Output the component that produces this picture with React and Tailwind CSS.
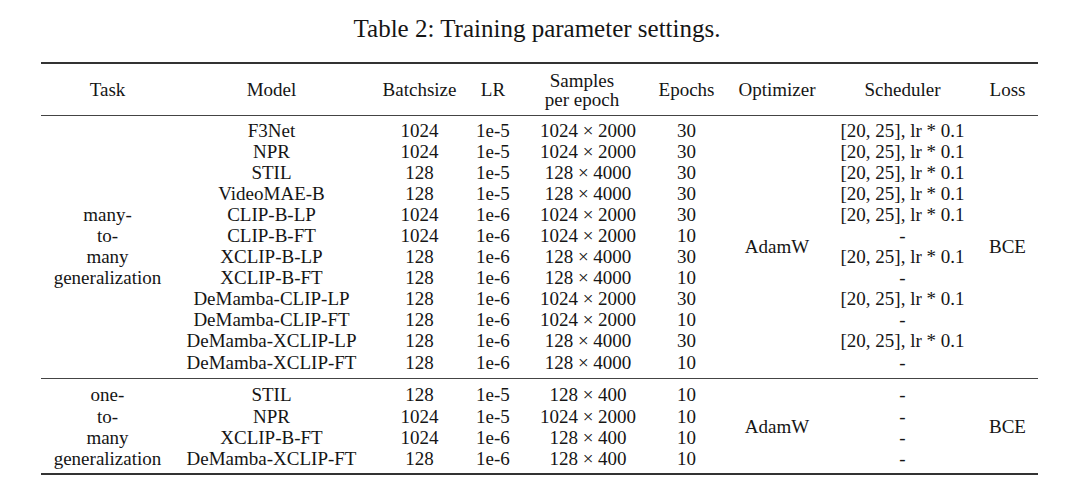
import React from "react";

const GRID = "grid grid-cols-[133px_195px_101px_46px_139px_63px_118px_133px_69px]";
const S = "[20, 25], lr * 0.1";

const g1 = [
  ["F3Net", "1024", "1e-5", "1024 × 2000", "30", S],
  ["NPR", "1024", "1e-5", "1024 × 2000", "30", S],
  ["STIL", "128", "1e-5", "128 × 4000", "30", S],
  ["VideoMAE-B", "128", "1e-5", "128 × 4000", "30", S],
  ["CLIP-B-LP", "1024", "1e-6", "1024 × 2000", "30", S],
  ["CLIP-B-FT", "1024", "1e-6", "1024 × 2000", "10", "-"],
  ["XCLIP-B-LP", "128", "1e-6", "128 × 4000", "30", S],
  ["XCLIP-B-FT", "128", "1e-6", "128 × 4000", "10", "-"],
  ["DeMamba-CLIP-LP", "128", "1e-6", "1024 × 2000", "30", S],
  ["DeMamba-CLIP-FT", "128", "1e-6", "1024 × 2000", "10", "-"],
  ["DeMamba-XCLIP-LP", "128", "1e-6", "128 × 4000", "30", S],
  ["DeMamba-XCLIP-FT", "128", "1e-6", "128 × 4000", "10", "-"],
];

const g2 = [
  ["STIL", "128", "1e-5", "128 × 400", "10", "-"],
  ["NPR", "1024", "1e-5", "1024 × 2000", "10", "-"],
  ["XCLIP-B-FT", "1024", "1e-6", "128 × 400", "10", "-"],
  ["DeMamba-XCLIP-FT", "128", "1e-6", "128 × 400", "10", "-"],
];

function Cells({ rows }) {
  return rows.map((r, i) => (
    <React.Fragment key={i}>
      <div className="text-center whitespace-nowrap">{r[0]}</div>
      <div className="text-center whitespace-nowrap">{r[1]}</div>
      <div className="text-center whitespace-nowrap">{r[2]}</div>
      <div className="text-center whitespace-nowrap pl-[5px]">{r[3]}</div>
      <div className="text-center whitespace-nowrap">{r[4]}</div>
      <div className="text-center whitespace-nowrap">{r[5]}</div>
    </React.Fragment>
  ));
}

function TaskCell({ rows, lines }) {
  return (
    <div className={`col-start-1 row-start-1 ${rows === 12 ? "row-span-12" : "row-span-4"} flex flex-col items-center justify-center`}>
      {lines.map((l, i) => (
        <div key={i} className="text-center whitespace-nowrap">{l}</div>
      ))}
    </div>
  );
}

export default function App() {
  return (
    <div className="w-[1080px] h-[499px] bg-white text-[#151515] font-['Liberation_Serif','Times_New_Roman',serif] overflow-hidden">
      <div className="h-[62px] pt-[16px] pr-[6px] text-center text-[25px] leading-[25px]">
        Table 2: Training parameter settings.
      </div>
      <div className="ml-[41px] w-[997px] text-[19px] leading-[21.1px]">
        <div className="h-[2px] bg-[#333]" />
        <div className={`${GRID} h-[51px] items-center`}>
          <div className="text-center">Task</div>
          <div className="text-center">Model</div>
          <div className="text-center">Batchsize</div>
          <div className="text-center">LR</div>
          <div className="text-center pr-[7px] leading-[19px]">
            <div>Samples</div>
            <div>per epoch</div>
          </div>
          <div className="text-center">Epochs</div>
          <div className="text-center">Optimizer</div>
          <div className="text-center">Scheduler</div>
          <div className="text-center pl-[8px]">Loss</div>
        </div>
        <div className="h-px bg-[#444]" />
        <div className={`${GRID} grid-rows-[repeat(12,21.1px)] pt-[3.5px] pb-[5px]`}>
          <TaskCell rows={12} lines={["many-", "to-", "many", "generalization"]} />
          <div className="col-start-7 row-start-1 row-span-12 flex items-center justify-center">AdamW</div>
          <div className="col-start-9 row-start-1 row-span-12 flex items-center justify-center pl-[8px]">BCE</div>
          <Cells rows={g1} />
        </div>
        <div className="h-px bg-[#444]" />
        <div className={`${GRID} grid-rows-[repeat(4,21.1px)] pt-[5.8px] pb-[4px]`}>
          <TaskCell rows={4} lines={["one-", "to-", "many", "generalization"]} />
          <div className="col-start-7 row-start-1 row-span-4 flex items-center justify-center">AdamW</div>
          <div className="col-start-9 row-start-1 row-span-4 flex items-center justify-center pl-[8px]">BCE</div>
          <Cells rows={g2} />
        </div>
        <div className="h-[2px] bg-[#333]" />
      </div>
    </div>
  );
}
